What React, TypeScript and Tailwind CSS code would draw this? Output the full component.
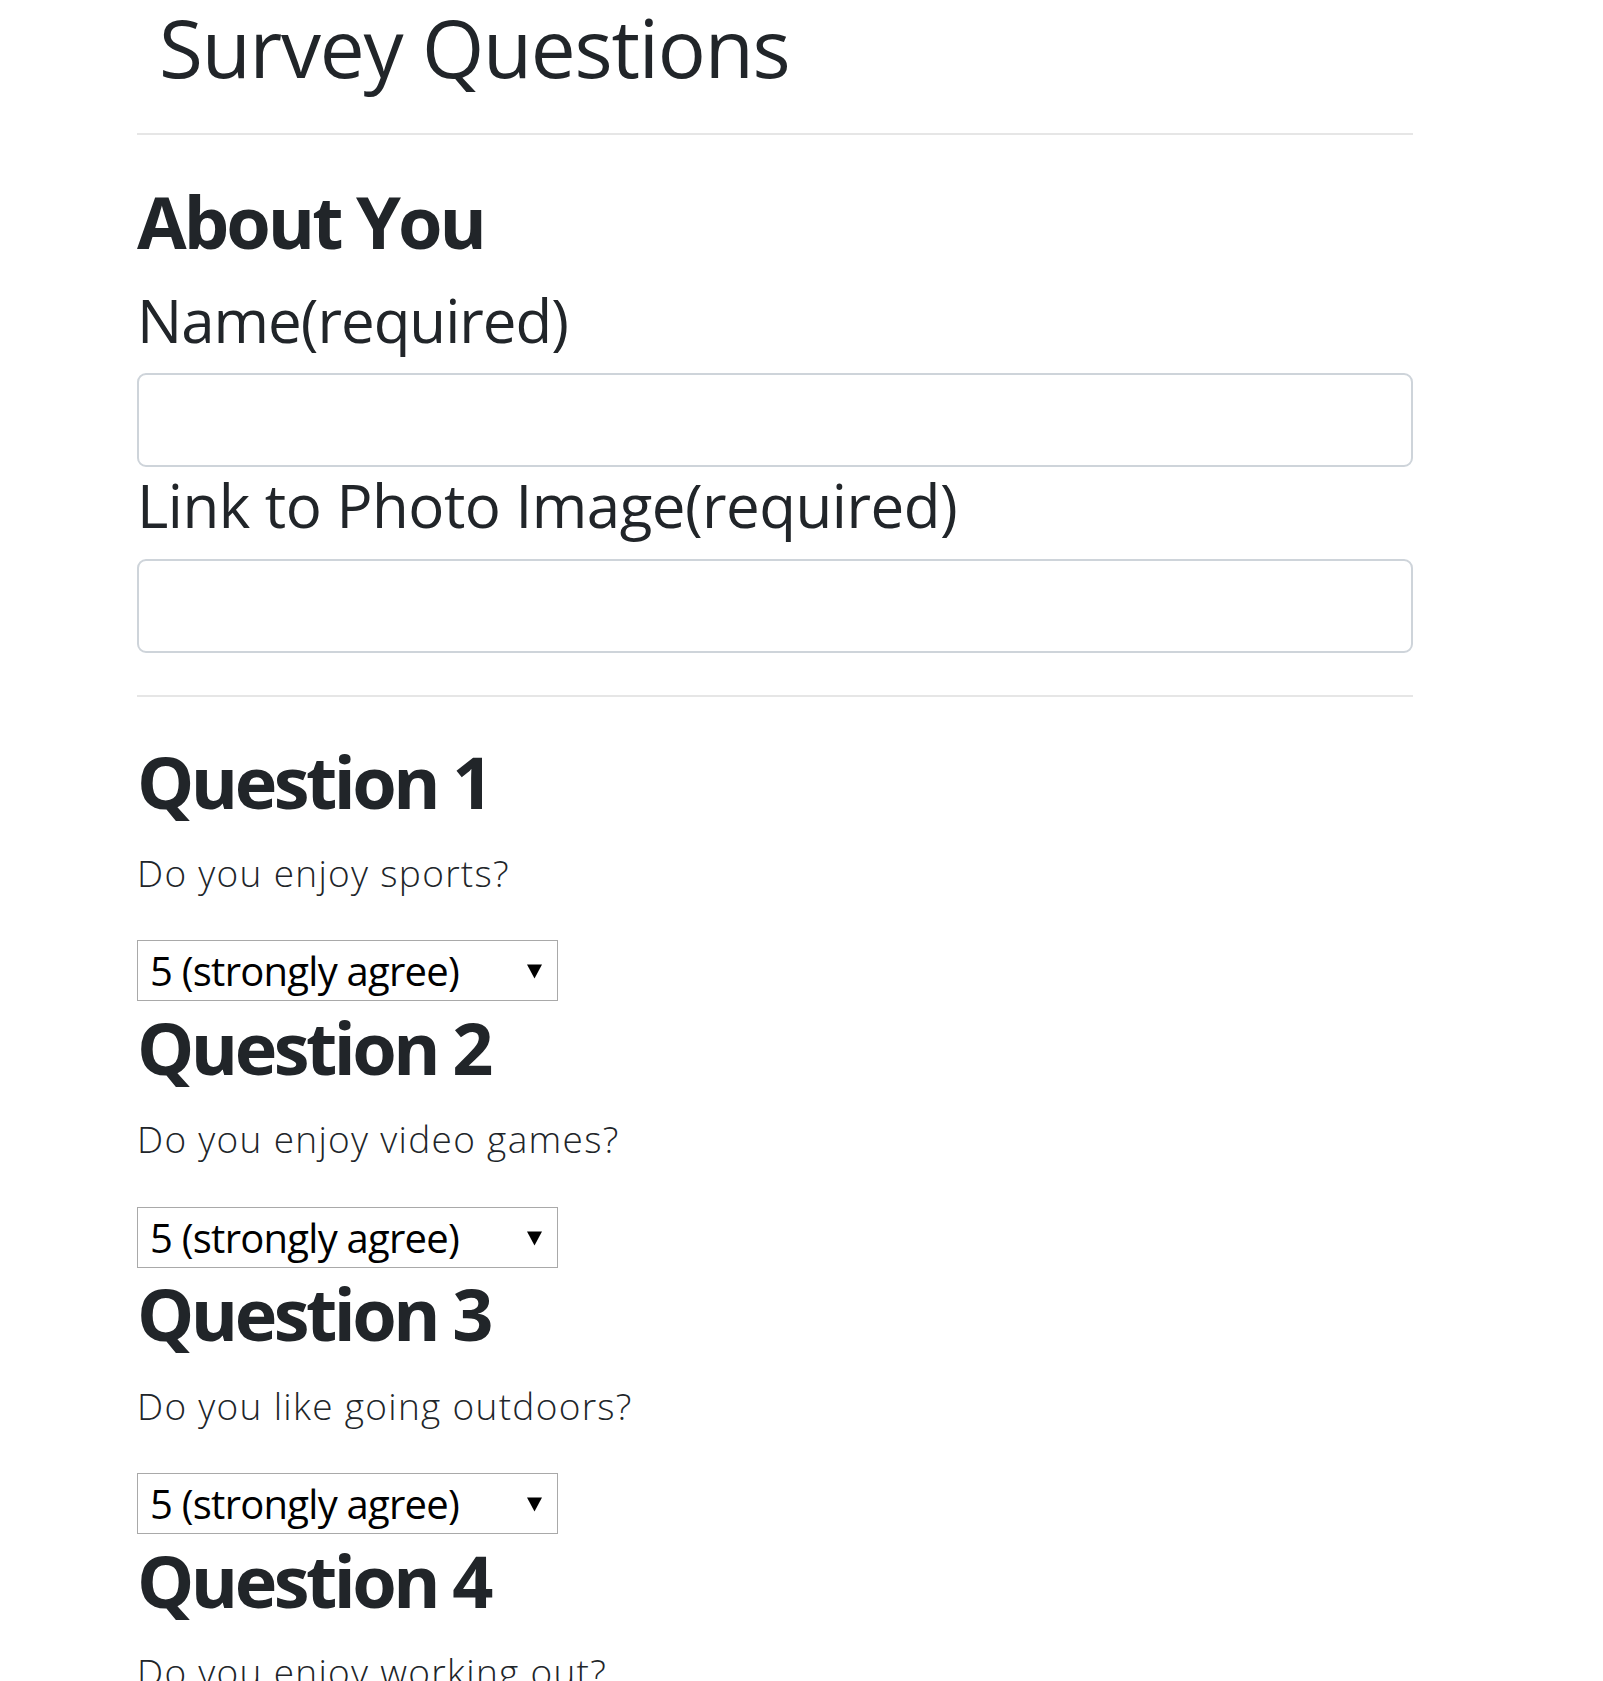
import React from 'react';

const questions = [
  { id: 1, text: 'Do you enjoy sports?' },
  { id: 2, text: 'Do you enjoy video games?' },
  { id: 3, text: 'Do you like going outdoors?' },
  { id: 4, text: 'Do you enjoy working out?' },
];

const options = [
  '1 (strongly disagree)',
  '2',
  '3',
  '4',
  '5 (strongly agree)',
];

const ScoreSelect: React.FC = () => (
  <div className="relative mt-[49.9px] h-[61px] w-[421px]">
    <select
      defaultValue={options[4]}
      className="h-full w-full appearance-none rounded-none border border-[#a9a9a9] bg-white pl-[12px] text-[40px] tracking-[-0.75px] text-black outline-none"
    >
      {options.map((o) => (
        <option key={o} value={o}>
          {o}
        </option>
      ))}
    </select>
    {/* flecha del select */}
    <svg
      className="pointer-events-none absolute left-[390px] top-[24px]"
      width="15"
      height="15"
      viewBox="0 0 15 15"
    >
      <polygon points="0,0.5 15,0.5 7.5,14.5" fill="#000" />
    </svg>
  </div>
);

export default function App() {
  return (
    <div className="min-h-screen bg-white font-['Open_Sans',sans-serif] text-[#212529]">
      <div className="ml-[137px] w-[1276px] pb-[60px]">
        <h1 className="pl-[22px] pt-[7px] text-[80px] font-normal leading-none tracking-[-1.2px]">
          Survey Questions
        </h1>
        <div className="mt-[46px] h-[2px] bg-[#e6e6e6]" />

        <h2 className="mt-[50px] text-[72px] font-bold leading-none tracking-[-3px]">About You</h2>
        <label className="mt-[32.5px] block text-[60px] leading-none tracking-[-1px]">Name(required)</label>
        <input
          type="text"
          className="mt-[23.5px] block h-[93.5px] w-full rounded-[9px] border-2 border-[#ced4da] bg-white px-4 outline-none"
        />
        <label className="mt-[8px] block text-[60px] leading-none tracking-[-0.5px]">
          Link to Photo Image(required)
        </label>
        <input
          type="text"
          className="mt-[24.5px] block h-[94px] w-full rounded-[9px] border-2 border-[#ced4da] bg-white px-4 outline-none"
        />
        <div className="mt-[42px] h-[2px] bg-[#e6e6e6]" />

        <div className="pt-[38px]">
          {questions.map((q) => (
            <div key={q.id} className="mt-[9.5px]">
              <h2 className="text-[72px] font-bold leading-none tracking-[-3.5px]">Question {q.id}</h2>
              <p className="mt-[37.1px] text-[37px] font-light leading-none tracking-[1.3px]">{q.text}</p>
              <ScoreSelect />
            </div>
          ))}
        </div>
      </div>
    </div>
  );
}
